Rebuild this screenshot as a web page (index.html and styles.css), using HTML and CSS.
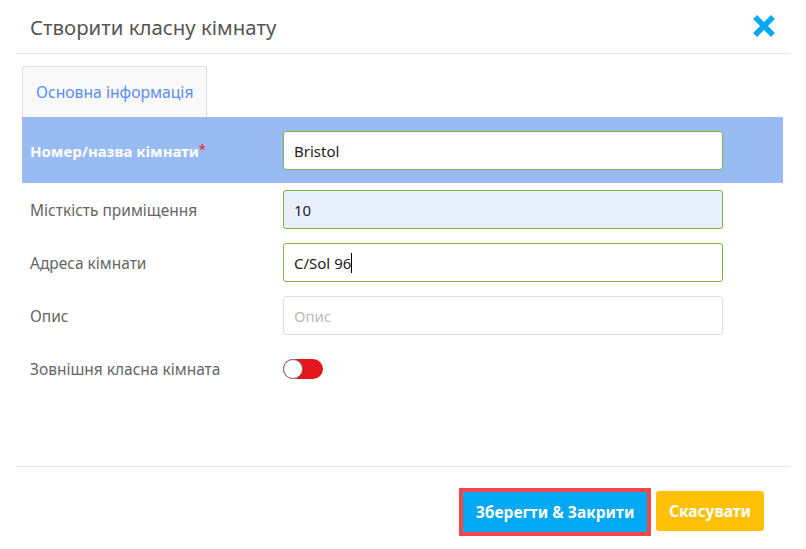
FILE: index.html
```html
<!DOCTYPE html>
<html>
    <head>
        <meta charset="utf-8">
        <link rel="stylesheet" href="styles.css">
    </head>
    <body>
        <div class="modal">
            <div class="modal-header">
                <h3 class="modal-title">Створити класну кімнату</h3>
                <span class="close-btn">
                    <svg width="22" height="22" viewBox="0 0 22 22">
                        <path d="M4 4 L18 18 M18 4 L4 18" stroke="#03a9f4" stroke-width="5.5" stroke-linecap="square"/>
                    </svg>
                </span>
            </div>
            <div class="modal-body">
                <div class="tabs">
                    <div class="tab active">Основна інформація</div>
                </div>
                <div class="form">
                    <div class="row row-main">
                        <label class="lbl">Номер/назва кімнати<span class="req">*</span></label>
                        <input class="field valid" type="text" value="Bristol">
                    </div>
                    <div class="row">
                        <label class="lbl">Місткість приміщення</label>
                        <input class="field valid autofill" type="text" value="10">
                    </div>
                    <div class="row">
                        <label class="lbl">Адреса кімнати</label>
                        <div class="field valid fake">C/Sol 96<span class="caret"></span></div>
                    </div>
                    <div class="row">
                        <label class="lbl">Опис</label>
                        <input class="field" type="text" placeholder="Опис">
                    </div>
                    <div class="row">
                        <label class="lbl">Зовнішня класна кімната</label>
                        <span class="switch"><span class="knob"></span></span>
                    </div>
                </div>
            </div>
            <div class="modal-footer">
                <button class="btn btn-save">Зберегти &amp; Закрити</button>
                <button class="btn btn-cancel">Скасувати</button>
            </div>
        </div>
    </body>
</html>
```
FILE: styles.css
```css
body {
    margin: 0;
    font-family: "Noto Sans", "Open Sans", sans-serif;
    background-color: #fff;
    color: #555;
}

.modal {
    width: 806px;
    height: 549px;
    background-color: #fff;
}

.modal-header {
    height: 53px;
    margin: 0 16px;
    padding: 0 15px 0 14px;
    border-bottom: 1px solid #e5e5e5;
    display: flex;
    align-items: center;
    justify-content: space-between;
}

.modal-title {
    margin: 0;
    font-size: 20.4px;
    font-weight: normal;
    color: #555;
}

.close-btn {
    display: flex;
    margin-top: -1px;
}

.modal-body {
    height: 400px;
    padding: 12px 23px 0 22px;
}

.tabs {
    display: flex;
}

.tab {
    height: 50px;
    padding: 0 13px;
    border: 1px solid #ddd;
    border-bottom: none;
    border-radius: 3px 3px 0 0;
    background-color: #f9f9f9;
    color: #5b8def;
    font-size: 15.7px;
    display: flex;
    align-items: center;
}

.row {
    display: flex;
    align-items: center;
    min-height: 39px;
    margin-bottom: 14px;
}

.row-main {
    background-color: #99bbf3;
    padding: 14px 0 13px;
    margin-bottom: 7px;
}

.lbl {
    width: 253px;
    padding-left: 8px;
    font-size: 15.5px;
    color: #666;
}

.row-main .lbl {
    font-size: 15px;
    color: #fff;
    font-weight: bold;
}

.req {
    color: #e53935;
    font-size: 12px;
    vertical-align: top;
}

.field {
    width: 440px;
    height: 39px;
    box-sizing: border-box;
    padding: 0 10px;
    border: 1px solid #ddd;
    border-radius: 3px;
    background-color: #fff;
    font-family: "Noto Sans", "Open Sans", sans-serif;
    font-size: 15px;
    color: #222;
    outline: none;
}

.field::placeholder {
    color: #bbb;
}

.valid {
    border-color: #7cb342;
}

.autofill {
    background-color: #e8f0fe;
}

.fake {
    display: flex;
    align-items: center;
}

.caret {
    display: inline-block;
    width: 1px;
    height: 20px;
    background-color: #000;
}

.switch {
    position: relative;
    width: 40px;
    height: 20px;
    border-radius: 10px;
    background-color: #e3161d;
}

.knob {
    position: absolute;
    left: 0;
    top: 0;
    width: 18px;
    height: 18px;
    border: 1px solid #8a6d74;
    border-radius: 50%;
    background-color: #fff;
}

.modal-footer {
    margin: 0 16px;
    padding: 25px 26px 0 0;
    border-top: 1px solid #e5e5e5;
    display: flex;
    justify-content: flex-end;
}

.btn {
    height: 40px;
    border: none;
    border-radius: 3px;
    color: #fff;
    font-family: "Noto Sans", "Open Sans", sans-serif;
    font-size: 15.5px;
    font-weight: bold;
    cursor: pointer;
}

.btn-save {
    width: 184px;
    background-color: #03a9f4;
    border-radius: 0;
    outline: 4px solid #f44646;
}

.btn-cancel {
    width: 108px;
    margin-left: 9px;
    margin-top: -1px;
    background-color: #ffc107;
}
```
